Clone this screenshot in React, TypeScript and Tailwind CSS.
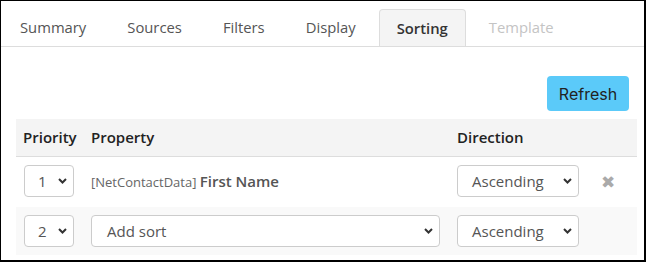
const tabs = ["Summary", "Sources", "Filters", "Display", "Sorting", "Template"];

const Chevron = () => (
  <svg width="9" height="6" viewBox="0 0 9 6" className="text-[#333]">
    <polyline points="1,1 4.5,4.5 8,1" fill="none" stroke="currentColor" strokeWidth="2" />
  </svg>
);

const Select = ({ value, className }: { value: string; className: string }) => (
  <div
    className={`flex items-center justify-between h-8 rounded border border-[#ccc] bg-white pl-[13px] pr-[6px] text-[15px] text-[#555] ${className}`}
  >
    <span>{value}</span>
    <Chevron />
  </div>
);

export default function App() {
  return (
    <div
      className="w-[646px] h-[262px] border-t border-l border-r-2 border-b-2 border-black bg-white overflow-hidden"
      style={{ fontFamily: '"Open Sans", sans-serif' }}
    >
      {/* tabs */}
      <div className="flex gap-[5px] pl-[1px] pt-2 border-b border-[#ddd] h-[46px]">
        {tabs.map((t) => {
          const active = t === "Sorting";
          const disabled = t === "Template";
          return (
            <div
              key={t}
              className={`h-[37px] flex items-center text-[14.8px] rounded-t ${
                active
                  ? "bg-[#f4f4f4] border border-b-0 border-[#ddd] font-semibold text-[#333] px-[17px]"
                  : disabled
                  ? "text-[#c4c4c4] px-[18px]"
                  : "text-[#555] px-[18px]"
              }`}
            >
              {t}
            </div>
          );
        })}
      </div>

      {/* toolbar */}
      <div className="flex justify-end pr-[15px] pt-[29px]">
        <button
          className="h-[35px] w-[82px] rounded bg-[#5bcaf9] text-[16px] text-[#222]"
          style={{ fontFamily: "Inter, sans-serif" }}
        >
          Refresh
        </button>
      </div>

      {/* sort table */}
      <div className="ml-[15px] mt-2 w-[621px]">
        <div className="grid grid-cols-[67px_366px_138px_50px] h-[38px] items-center bg-[#f4f4f4] border-b border-[#ddd] text-[15px] font-semibold text-[#222]">
          <div className="pl-[7px]">Priority</div>
          <div className="pl-2">Property</div>
          <div className="pl-2">Direction</div>
          <div />
        </div>

        <div className="grid grid-cols-[67px_366px_138px_50px] items-center pt-2 pb-[10px]">
          <div className="pl-2">
            <Select value="1" className="w-[50px]" />
          </div>
          <div className="pl-2 text-[#555]">
            <span className="text-[13px] text-[#666]">[NetContactData] </span>
            <span className="text-[15px] font-semibold">First Name</span>
          </div>
          <div className="pl-2">
            <Select value="Ascending" className="w-[122px] pl-[14px]" />
          </div>
          <div className="pl-[14px] text-[17px] text-[#aaa] leading-none">✖</div>
        </div>

        <div className="grid grid-cols-[67px_366px_138px_50px] items-center py-2 bg-[#f9f9f9]">
          <div className="pl-2">
            <Select value="2" className="w-[50px]" />
          </div>
          <div className="pl-2">
            <Select value="Add sort" className="w-[349px] pl-[15px]" />
          </div>
          <div className="pl-2">
            <Select value="Ascending" className="w-[122px] pl-[14px]" />
          </div>
          <div />
        </div>
      </div>
    </div>
  );
}
